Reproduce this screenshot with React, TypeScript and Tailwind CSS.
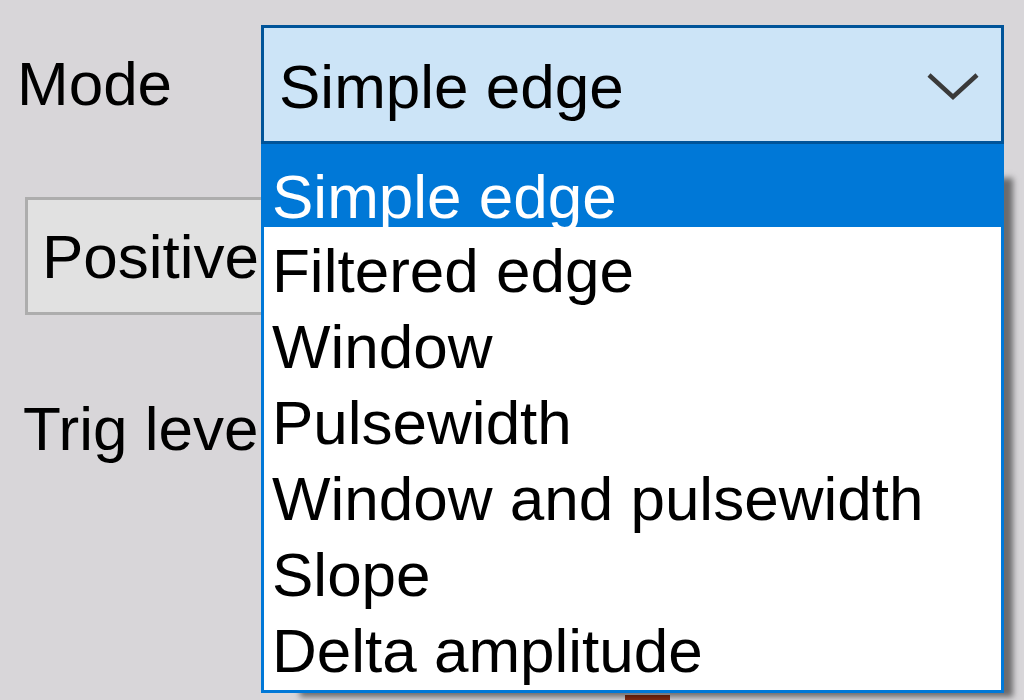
import React from 'react';

const modes = [
  'Simple edge',
  'Filtered edge',
  'Window',
  'Pulsewidth',
  'Window and pulsewidth',
  'Slope',
  'Delta amplitude',
];

const Chevron: React.FC = () => (
  <svg width="56" height="32" viewBox="0 0 56 32" className="mt-[42px] mr-[20px] shrink-0">
    <polyline points="4,5 28,27 52,5" fill="none" stroke="#3a3a3a" strokeWidth="4.5" />
  </svg>
);

const App: React.FC = () => {
  const selected = 0;

  return (
    <div className="relative w-[1024px] h-[700px] overflow-hidden bg-[#d8d6d9] pt-[25px] font-['Liberation_Sans',Arial,sans-serif] text-[62px] text-black">
      {/* Mode row */}
      <div className="flex items-start">
        <div className="w-[261px] shrink-0 pl-[17px] pt-[27px] leading-[63px]">Mode</div>
        <div className="flex h-[119px] w-[743px] shrink-0 items-start justify-between border-[3px] border-[#005499] bg-[#cce4f7]">
          <span className="pl-[15px] pt-[27px] leading-[63px] whitespace-nowrap">Simple edge</span>
          <Chevron />
        </div>
      </div>

      {/* Polarity button */}
      <div className="ml-[25px] mt-[53px] h-[118px] w-[320px] border-[3px] border-[#adadad] bg-[#e1e1e1] pl-[14px] pt-[25px] leading-[63px]">
        Positive
      </div>

      {/* Trigger level */}
      <div className="ml-[23px] mt-[82px] leading-[63px] whitespace-nowrap">Trig level</div>

      <div className="ml-[625px] mt-[235px] h-[10px] w-[45px] bg-[#8a2c12]" />

      {/* Open dropdown list */}
      <div className="absolute left-[261px] top-[144px] w-[743px] border-x-[3px] border-b-[3px] border-[#0078d7] bg-white pb-[7px] shadow-[24px_19px_6px_-15px_rgba(0,0,0,0.5)]">
        {modes.map((m, i) =>
          i === selected ? (
            <div key={m} className="h-[83px] bg-[#0078d7] pl-[8px] pt-[21px] leading-[63px] text-white whitespace-nowrap">
              {m}
            </div>
          ) : (
            <div key={m} className="h-[76px] pl-[8px] pt-[12px] leading-[63px] whitespace-nowrap">
              {m}
            </div>
          )
        )}
      </div>
    </div>
  );
};

export default App;
